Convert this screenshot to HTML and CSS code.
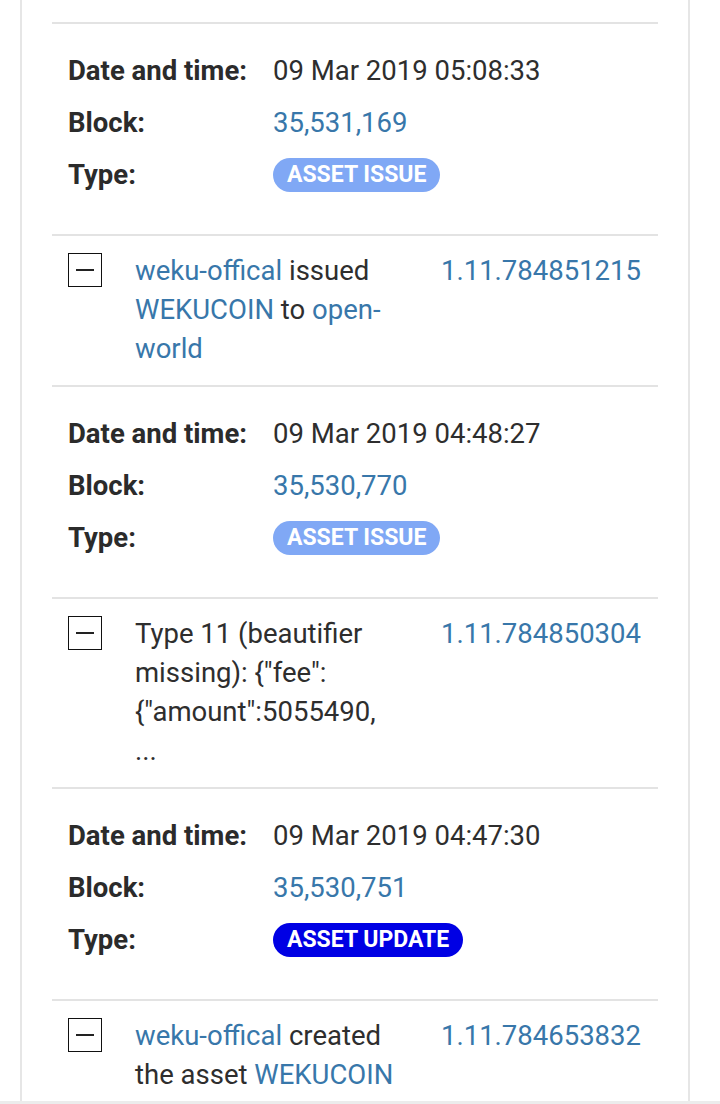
FILE: index.html
```html
<!DOCTYPE html>
<html lang="en">
<head>
<meta charset="utf-8">
<title>Operations</title>
<link rel="stylesheet" href="styles.css">
</head>
<body>
<div class="card">
  <div class="block details">
    <div class="label">Date and time:</div><div class="value">09 Mar 2019 05:08:33</div>
    <div class="label">Block:</div><div class="value"><a class="link" href="#">35,531,169</a></div>
    <div class="label">Type:</div><div class="value"><span class="badge badge-issue">ASSET ISSUE</span></div>
  </div>
  <div class="block op">
    <span class="toggle"></span>
    <div class="desc"><a class="link" href="#">weku-offical</a> issued <a class="link" href="#">WEKUCOIN</a> to <a class="link" href="#">open-world</a></div>
    <a class="link opid" href="#">1.11.784851215</a>
  </div>
  <div class="block details">
    <div class="label">Date and time:</div><div class="value">09 Mar 2019 04:48:27</div>
    <div class="label">Block:</div><div class="value"><a class="link" href="#">35,530,770</a></div>
    <div class="label">Type:</div><div class="value"><span class="badge badge-issue">ASSET ISSUE</span></div>
  </div>
  <div class="block op">
    <span class="toggle"></span>
    <div class="desc">Type 11 (beautifier missing): {"fee":{"amount":5055490,<span class="more">...</span></div>
    <a class="link opid" href="#">1.11.784850304</a>
  </div>
  <div class="block details">
    <div class="label">Date and time:</div><div class="value">09 Mar 2019 04:47:30</div>
    <div class="label">Block:</div><div class="value"><a class="link" href="#">35,530,751</a></div>
    <div class="label">Type:</div><div class="value"><span class="badge badge-update">ASSET UPDATE</span></div>
  </div>
  <div class="block op">
    <span class="toggle"></span>
    <div class="desc"><a class="link" href="#">weku-offical</a> created the asset <a class="link" href="#">WEKUCOIN</a></div>
    <a class="link opid" href="#">1.11.784653832</a>
  </div>
</div>
<div class="navbar-edge"></div>
</body>
</html>
```

FILE: styles.css
```css
html, body {
  margin: 0;
  padding: 0;
  background: #ffffff;
}

body {
  font-family: Roboto, "Liberation Sans", sans-serif;
  font-size: 27.5px;
  color: #2e2e2e;
  overflow: hidden;
}

.card {
  box-sizing: border-box;
  margin-left: 20px;
  width: 670px;
  min-height: 1120px;
  border-left: 2px solid #e6e6e6;
  border-right: 2px solid #e6e6e6;
  padding: 22px 30px 0 30px;
}

.block {
  border-top: 2px solid #e3e3e3;
}

.details {
  display: grid;
  grid-template-columns: 205px 1fr;
  grid-auto-rows: 52px;
  align-items: center;
  padding: 20px 16px 34px 16px;
}

.label {
  font-weight: 700;
  color: #2b2b2b;
}

.value {
  color: #2e2e2e;
}

.link {
  color: #3877aa;
  text-decoration: none;
}

.badge {
  display: inline-block;
  height: 34px;
  line-height: 34px;
  padding: 0 14px;
  border-radius: 17px;
  font-size: 23px;
  font-weight: 700;
  color: #ffffff;
  vertical-align: middle;
}

.badge-issue {
  background: #80a8f5;
}

.badge-update {
  background: #0000e4;
}

.op {
  display: grid;
  grid-template-columns: 33px 270px auto;
  column-gap: 34px;
  align-items: start;
  padding: 15px 16px 17px 16px;
  line-height: 39px;
}

.toggle {
  position: relative;
  box-sizing: border-box;
  width: 34px;
  height: 34px;
  margin-top: 2px;
  border: 1.5px solid #111;
  background: #fff;
}

.toggle::after {
  content: "";
  position: absolute;
  left: 7px;
  right: 7px;
  top: 15px;
  height: 2px;
  background: #222;
}

.desc {
  color: #2e2e2e;
}

.more {
  display: block;
}

.opid {
  margin-left: 2px;
}

.navbar-edge {
  position: fixed;
  left: 0;
  right: 0;
  bottom: 0;
  height: 3px;
  background: #ececec;
}
```
